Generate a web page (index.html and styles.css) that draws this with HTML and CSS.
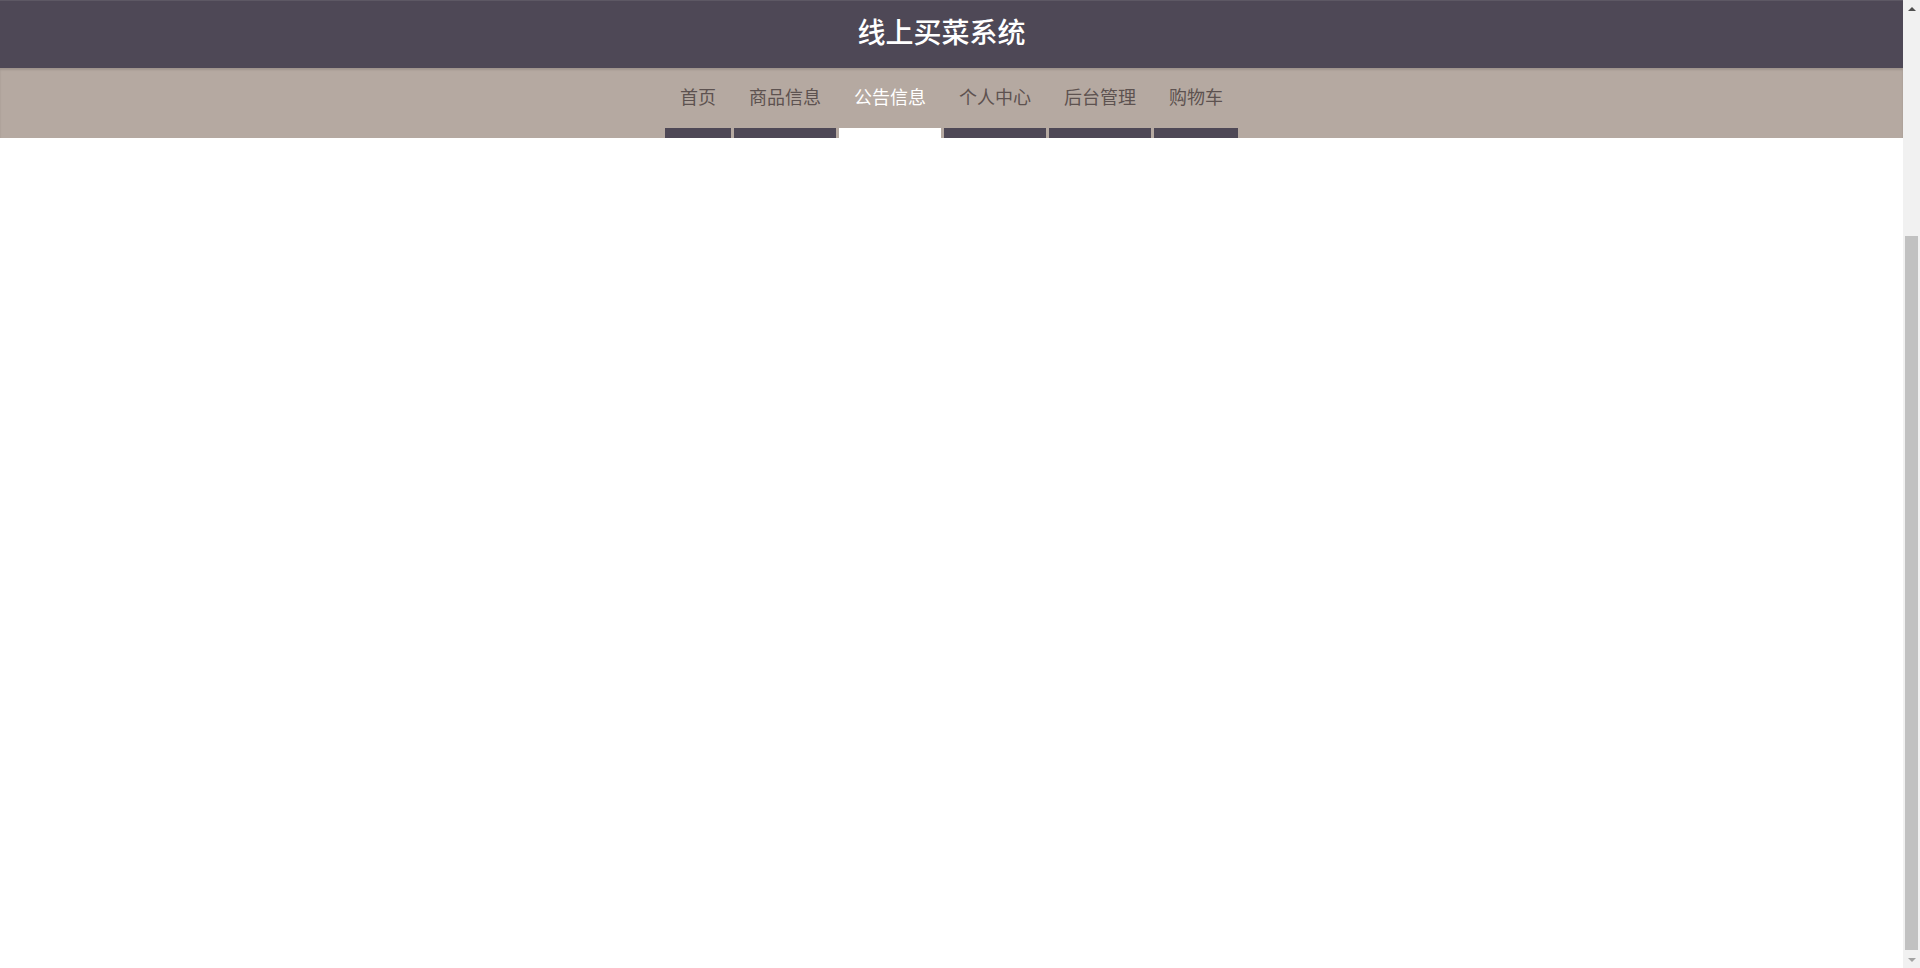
FILE: index.html
```html
<!DOCTYPE html>
<html lang="zh-CN">
<head>
  <meta charset="UTF-8">
  <meta name="viewport" content="width=device-width, initial-scale=1.0">
  <title>线上买菜系统</title>
  <link rel="stylesheet" href="styles.css">
</head>
<body>

  <div class="page">
    <header class="site-header">
      <div class="title-bar">
        <h1>线上买菜系统</h1>
      </div>
      <nav class="main-nav">
        <a class="nav-item" href="#">首页</a>
        <a class="nav-item" href="#">商品信息</a>
        <a class="nav-item active" href="#">公告信息</a>
        <a class="nav-item" href="#">个人中心</a>
        <a class="nav-item" href="#">后台管理</a>
        <a class="nav-item" href="#">购物车</a>
      </nav>
    </header>

    <!-- 公告列表区域 -->
    <main class="content"></main>
  </div>

  <!-- 滚动条 -->
  <div class="scrollbar">
    <span class="arrow up"></span>
    <div class="track">
      <div class="thumb"></div>
    </div>
    <span class="arrow down"></span>
  </div>

</body>
</html>
```

FILE: styles.css
```css
html, body {
  margin: 0;
  padding: 0;
  height: 100%;
  overflow: hidden;
}

body {
  display: flex;
  font-family: "Microsoft YaHei", "Liberation Sans", "Noto Sans CJK SC", sans-serif;
  background: #ffffff;
  color: #333;
}

.page {
  flex: 1;
  display: flex;
  flex-direction: column;
}

.title-bar {
  height: 68px;
  background: #4e4856;
  border-top: 1px solid #5d5864;
  box-sizing: border-box;
  text-align: center;
  padding-right: 20px;
}

.title-bar h1 {
  margin: 0;
  font-size: 28px;
  font-weight: 500;
  line-height: 66px;
  color: #ffffff;
}

.main-nav {
  display: flex;
  justify-content: center;
  gap: 3px;
  height: 70px;
  background: #b5a9a1;
  box-shadow: inset 0 2px 2px rgba(0,0,0,0.12);
}

.nav-item {
  display: flex;
  flex-direction: column;
  padding: 0 15px;
  font-size: 18px;
  line-height: 60px;
  color: #5d5250;
  text-decoration: none;
}

.nav-item::after {
  content: "";
  display: block;
  height: 10px;
  margin: 0 -15px;
  background: #4e4856;
}

.nav-item.active {
  color: #ffffff;
}

.nav-item.active::after {
  background: #ffffff;
}

.content {
  flex: 1;
}

/* scrollbar */
.scrollbar {
  width: 17px;
  display: flex;
  flex-direction: column;
  background: #f1f1f1;
}

.arrow {
  height: 17px;
  display: flex;
  align-items: center;
  justify-content: center;
}

.arrow::before {
  content: "";
  border-left: 4px solid transparent;
  border-right: 4px solid transparent;
}

.arrow.up::before {
  border-bottom: 4px solid #505050;
}

.arrow.down::before {
  border-top: 4px solid #a3a3a3;
}

.track {
  flex: 1;
  display: flex;
  flex-direction: column;
  justify-content: flex-end;
  padding: 0 2px 1px;
}

.thumb {
  height: 714px;
  background: #c1c1c1;
}
```
